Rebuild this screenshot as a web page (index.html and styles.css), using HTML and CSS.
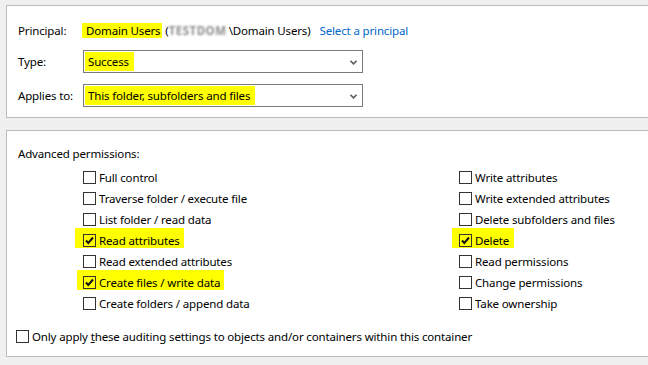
FILE: index.html
```html
<!DOCTYPE html>
<html>
<head>
<meta charset="utf-8">
<link rel="stylesheet" href="styles.css">
</head>
<body>
<div class="panel top">
  <div class="row principal">
    <span class="label">Principal:</span>
    <span class="value"><span class="hl name">Domain Users</span> (<span class="blur">TESTDOM</span>\Domain Users)</span>
    <a class="link">Select a principal</a>
  </div>
  <div class="row field type">
    <span class="label">Type:</span>
    <div class="select"><span class="hl sel">Success</span><svg class="chev" width="7" height="5" viewBox="0 0 7 5"><path d="M0.5 0.8 L3.5 3.8 L6.5 0.8" fill="none" stroke="#5f5f5f" stroke-width="1.6"/></svg></div>
  </div>
  <div class="row field applies">
    <span class="label">Applies to:</span>
    <div class="select"><span class="hl sel">This folder, subfolders and files</span><svg class="chev" width="7" height="5" viewBox="0 0 7 5"><path d="M0.5 0.8 L3.5 3.8 L6.5 0.8" fill="none" stroke="#5f5f5f" stroke-width="1.6"/></svg></div>
  </div>
</div>
<div class="panel perms">
  <div class="heading">Advanced permissions:</div>
  <div class="grid">
    <div class="col left">
      <div class="cb"><span class="box"></span><span>Full control</span></div>
      <div class="cb"><span class="box"></span><span>Traverse folder / execute file</span></div>
      <div class="cb"><span class="box"></span><span>List folder / read data</span></div>
      <div class="cb"><span class="mark ra"><span class="box checked"><svg width="11" height="11" viewBox="0 0 11 11"><path d="M2 5.5 L4.3 8 L9 2.5" fill="none" stroke="#111" stroke-width="2"/></svg></span><span>Read attributes</span></span></div>
      <div class="cb"><span class="box"></span><span>Read extended attributes</span></div>
      <div class="cb"><span class="mark cf"><span class="box checked"><svg width="11" height="11" viewBox="0 0 11 11"><path d="M2 5.5 L4.3 8 L9 2.5" fill="none" stroke="#111" stroke-width="2"/></svg></span><span>Create files / write data</span></span></div>
      <div class="cb"><span class="box"></span><span>Create folders / append data</span></div>
    </div>
    <div class="col right">
      <div class="cb"><span class="box"></span><span>Write attributes</span></div>
      <div class="cb"><span class="box"></span><span>Write extended attributes</span></div>
      <div class="cb"><span class="box"></span><span>Delete subfolders and files</span></div>
      <div class="cb"><span class="mark del"><span class="box checked"><svg width="11" height="11" viewBox="0 0 11 11"><path d="M2 5.5 L4.3 8 L9 2.5" fill="none" stroke="#111" stroke-width="2"/></svg></span><span>Delete</span></span></div>
      <div class="cb"><span class="box"></span><span>Read permissions</span></div>
      <div class="cb"><span class="box"></span><span>Change permissions</span></div>
      <div class="cb"><span class="box"></span><span>Take ownership</span></div>
    </div>
  </div>
  <div class="cb only"><span class="box"></span><span>Only apply <u>t</u>hese auditing settings to objects and/or containers within this container</span></div>
</div>
</body>
</html>
```

FILE: styles.css
```css
html, body {
  margin: 0;
  padding: 0;
  background: #f0f0f0;
  overflow: hidden;
  width: 648px;
  height: 365px;
}
body {
  font-family: "Noto Sans", "Open Sans", sans-serif;
  font-size: 11.5px;
  letter-spacing: -0.15px;
  color: #000;
}
.panel {
  background: #fff;
  border: 1px solid #bcbcbc;
  margin-left: 6px;
  margin-right: -30px;
  box-sizing: border-box;
}
.panel.top {
  margin-top: 5px;
  padding: 13px 0 10px 11px;
}
.row {
  display: flex;
  align-items: center;
}
.label {
  width: 65px;
  flex: none;
  white-space: nowrap;
}
.principal {
  height: 23px;
  white-space: nowrap;
}
.hl {
  background: #ffff00;
}
.name {
  display: inline-block;
  line-height: 15px;
  padding: 0 2px 0 4px;
  margin-left: -1px;
}
.blur {
  display: inline-block;
  width: 60px;
  color: #8c8c8c;
  font-weight: bold;
  filter: blur(0.9px);
  letter-spacing: 0.5px;
  vertical-align: bottom;
}
.link {
  color: #0066cc;
  margin-left: 9px;
}
.field .select {
  width: 280px;
  height: 23px;
  box-sizing: border-box;
  border: 1px solid #7a7a7a;
  background: #fff;
  display: flex;
  align-items: center;
  justify-content: space-between;
  padding: 1px 5px 0 1px;
}
.type { margin-top: 8px; }
.applies { margin-top: 11px; }
.sel {
  display: inline-block;
  height: 19px;
  line-height: 19px;
  padding: 0 5px 0 3px;
  margin-top: -1px;
}
.chev { flex: none; }
.panel.perms {
  margin-top: 12px;
  padding: 13px 0 9px 11px;
}
.heading {
  line-height: 20px;
}
.grid {
  display: grid;
  grid-template-columns: 376px 1fr;
  margin-top: 3px;
  margin-left: 65px;
}
.cb {
  display: flex;
  align-items: center;
  height: 21px;
  white-space: nowrap;
}
.box {
  width: 13px;
  height: 13px;
  box-sizing: border-box;
  border: 1px solid #333;
  background: #fff;
  margin-right: 3px;
  flex: none;
  display: flex;
  align-items: center;
  justify-content: center;
}
.box.checked {
  background: transparent;
}
.mark {
  display: inline-flex;
  align-items: center;
  align-self: flex-start;
  background: #ffff00;
  height: 20px;
  box-sizing: border-box;
  padding-top: 4px;
  margin-top: -2px;
}
.mark.ra { padding-left: 8px; margin-left: -8px; padding-right: 4px; }
.mark.cf { padding-left: 6px; margin-left: -6px; padding-right: 4px; }
.mark.del { padding-left: 7px; margin-left: -7px; padding-right: 5px; }
.only {
  margin-top: 12px;
  margin-left: -2px;
}
```
